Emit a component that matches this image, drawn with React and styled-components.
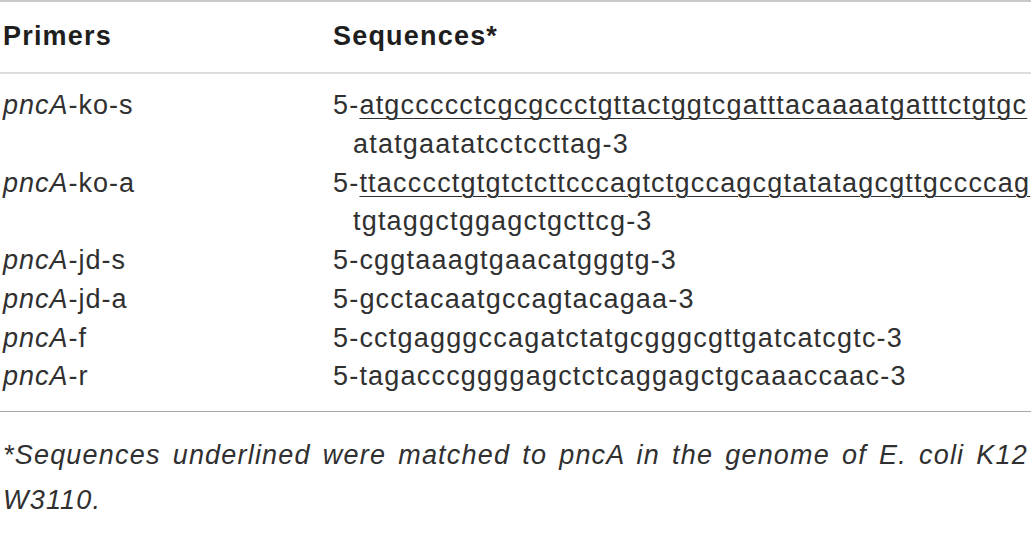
import React from "react";
import styled, { createGlobalStyle } from "styled-components";

const Global = createGlobalStyle`
  html, body { margin: 0; padding: 0; background: #fff; }
  body { font-family: "Liberation Sans", Arial, sans-serif; color: #231f20; }
`;

const Wrap = styled.div`
  width: 1031px;
  height: 550px;
  overflow: hidden;
  background: #fff;
`;

const Table = styled.div`
  border-top: 2px solid #c9c9c9;
  border-bottom: 1px solid #a9a9a9;
`;

const Row = styled.div`
  display: grid;
  grid-template-columns: 330px 1fr;
  padding-left: 3px;
  font-size: 27px;
  line-height: 38.7px;
`;

const HeadRow = styled(Row)`
  font-weight: 700;
  color: #1e1e1e;
  padding-top: 14.5px;
  padding-bottom: 16.5px;
  border-bottom: 2px solid #dcdcdc;
  letter-spacing: 1.2px;
`;

const Body = styled.div`
  padding-top: 12.6px;
  padding-bottom: 15px;
`;

const Cell = styled.div`
  color: #303030;
  letter-spacing: ${(p) => (p.$seq ? "1.2px" : "1px")};
  padding-left: ${(p) => (p.$indent ? "20px" : "0")};
  white-space: nowrap;
`;

const Gene = styled.i``;

const Under = styled.span`
  text-decoration: underline;
  text-decoration-thickness: 1px;
  text-underline-offset: 4px;
`;

const Note = styled.p`
  margin: 21px 0 0;
  padding: 0 3px;
  font-size: 27px;
  line-height: 45px;
  font-style: italic;
  text-align: justify;
  letter-spacing: 1.2px;
  color: #303030;
`;

const rows = [
  { name: "-ko-s", seq: [["5-", false], ["atgccccctcgcgccctgttactggtcgatttacaaaatgatttctgtgc", true]], cont: "atatgaatatcctccttag-3" },
  { name: "-ko-a", seq: [["5-", false], ["ttacccctgtgtctcttcccagtctgccagcgtatatagcgttgccccag", true]], cont: "tgtaggctggagctgcttcg-3" },
  { name: "-jd-s", seq: [["5-cggtaaagtgaacatgggtg-3", false]] },
  { name: "-jd-a", seq: [["5-gcctacaatgccagtacagaa-3", false]] },
  { name: "-f", seq: [["5-cctgagggccagatctatgcgggcgttgatcatcgtc-3", false]] },
  { name: "-r", seq: [["5-tagacccggggagctctcaggagctgcaaaccaac-3", false]] },
];

export default function App() {
  return (
    <Wrap>
      <Global />
      <Table>
        <HeadRow>
          <div>Primers</div>
          <div>Sequences*</div>
        </HeadRow>
        <Body>
          {rows.map((r, i) => (
            <React.Fragment key={i}>
              <Row>
                <Cell>
                  <Gene>pncA</Gene>
                  {r.name}
                </Cell>
                <Cell $seq>
                  {r.seq.map(([t, u], j) => (u ? <Under key={j}>{t}</Under> : <span key={j}>{t}</span>))}
                </Cell>
              </Row>
              {r.cont && (
                <Row>
                  <Cell />
                  <Cell $seq $indent>{r.cont}</Cell>
                </Row>
              )}
            </React.Fragment>
          ))}
        </Body>
      </Table>
      <Note>
        *Sequences underlined were matched to pncA in the genome of E. coli K12 W3110.
      </Note>
    </Wrap>
  );
}
